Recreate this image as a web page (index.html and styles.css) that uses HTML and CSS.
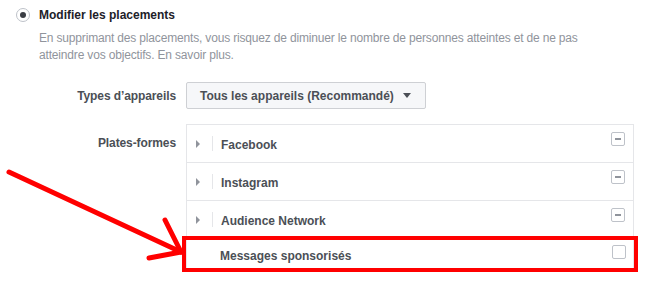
FILE: index.html
```html
<!DOCTYPE html>
<html lang="fr">
<head>
<meta charset="utf-8">
<title>Modifier les placements</title>
<link rel="stylesheet" href="styles.css">
</head>
<body>
<div class="page">
  <div class="option">
    <span class="radio"><span class="radio-dot"></span></span>
    <span class="option-title">Modifier les placements</span>
  </div>
  <p class="desc">En supprimant des placements, vous risquez de diminuer le nombre de personnes atteintes et de ne pas atteindre vos objectifs. En savoir plus.</p>

  <div class="form">
    <div class="label label-device">Types d’appareils</div>
    <div class="field">
      <button class="select">Tous les appareils (Recommandé) <span class="caret"></span></button>
    </div>

    <div class="label label-platforms">Plates-formes</div>
    <div class="field">
      <div class="list">
        <div class="row">
          <span class="expander"></span><span class="sep"></span>
          <span class="name">Facebook</span>
          <span class="check partial"></span>
        </div>
        <div class="row">
          <span class="expander"></span><span class="sep"></span>
          <span class="name">Instagram</span>
          <span class="check partial"></span>
        </div>
        <div class="row">
          <span class="expander"></span><span class="sep"></span>
          <span class="name">Audience Network</span>
          <span class="check partial"></span>
        </div>
        <div class="row row-last highlighted">
          <span class="spacer"></span>
          <span class="name">Messages sponsorisés</span>
          <span class="check"></span>
        </div>
      </div>
    </div>
  </div>

  <svg class="annotation" width="653" height="284" viewBox="0 0 653 284">
    <g stroke="#ff0000" stroke-width="5" stroke-linecap="round" fill="none">
      <line x1="9" y1="172" x2="181" y2="252"/>
      <line x1="165" y1="220" x2="181" y2="252"/>
      <line x1="149" y1="258" x2="181" y2="252"/>
    </g>
  </svg>
</div>
</body>
</html>
```
FILE: styles.css
```css
* { box-sizing: border-box; }
html, body { margin: 0; padding: 0; background: #fff; }
body {
  font-family: "Liberation Sans", Arial, Helvetica, sans-serif;
  font-size: 12px;
  color: #4b4f56;
}
.page {
  position: relative;
  width: 653px;
  height: 284px;
  padding: 7px 0 0 16px;
  overflow: hidden;
}
.option {
  display: flex;
  align-items: center;
  height: 15px;
}
.radio {
  width: 14px;
  height: 14px;
  border: 1px solid #bec2c9;
  border-radius: 50%;
  display: flex;
  align-items: center;
  justify-content: center;
  margin-right: 9px;
}
.radio-dot {
  width: 6px;
  height: 6px;
  border-radius: 50%;
  background: #3b3e44;
}
.option-title {
  font-weight: bold;
  font-size: 12px;
  color: #1d2129;
}
.desc {
  margin: 8px 0 0 23px;
  width: 580px;
  line-height: 17px;
  color: #90949c;
  letter-spacing: -0.17px;
}

.form {
  display: grid;
  grid-template-columns: 160px 448px;
  column-gap: 10px;
  row-gap: 15px;
  margin-top: 18px;
}
.label {
  text-align: right;
  font-weight: bold;
  color: #4b4f56;
  letter-spacing: -0.1px;
}
.label-device { align-self: center; }
.label-platforms { padding-top: 12px; }

.select {
  display: flex;
  align-items: center;
  width: 240px;
  height: 27px;
  padding: 0 0 0 13px;
  background: #f6f7f9;
  border: 1px solid #ced0d4;
  border-radius: 2px;
  font-family: inherit;
  font-size: 12px;
  font-weight: bold;
  color: #4b4f56;
}
.caret {
  display: inline-block;
  width: 0;
  height: 0;
  margin-left: 9px;
  border-left: 4px solid transparent;
  border-right: 4px solid transparent;
  border-top: 5px solid #4b4f56;
}

.list {
  width: 448px;
  border: 1px solid #e5e6e9;
  border-bottom: none;
}
.row {
  display: flex;
  align-items: center;
  height: 38px;
  border-bottom: 1px solid #e5e6e9;
  padding: 0 8px 0 9px;
}
.expander {
  width: 0;
  height: 0;
  border-top: 4px solid transparent;
  border-bottom: 4px solid transparent;
  border-left: 4px solid #90949c;
}
.sep {
  width: 1px;
  height: 15px;
  background: #e5e6e9;
  margin-left: 12px;
}
.spacer { width: 17px; }
.name {
  flex: 1;
  margin-left: 8px;
  font-weight: bold;
  color: #4b4f56;
  padding-top: 2px;
}
.check {
  align-self: flex-start;
  margin-top: 7px;
  width: 14px;
  height: 14px;
  border: 1px solid #bec2c9;
  border-radius: 2px;
  background: #fff;
  display: flex;
  align-items: center;
  justify-content: center;
}
.check.partial::after {
  content: "";
  width: 6px;
  height: 2px;
  background: #90949c;
}
.row-last {
  height: 28px;
  margin-top: 1px;
  border-bottom: none;
}
.row-last .check { margin-top: 5px; }
.row-last .name { padding-top: 4px; }
.highlighted {
  outline: 4px solid #ff0000;
  outline-offset: 0;
  margin-left: -1px;
  margin-right: -1px;
}

.annotation {
  position: absolute;
  left: 0;
  top: 0;
  pointer-events: none;
}
```
